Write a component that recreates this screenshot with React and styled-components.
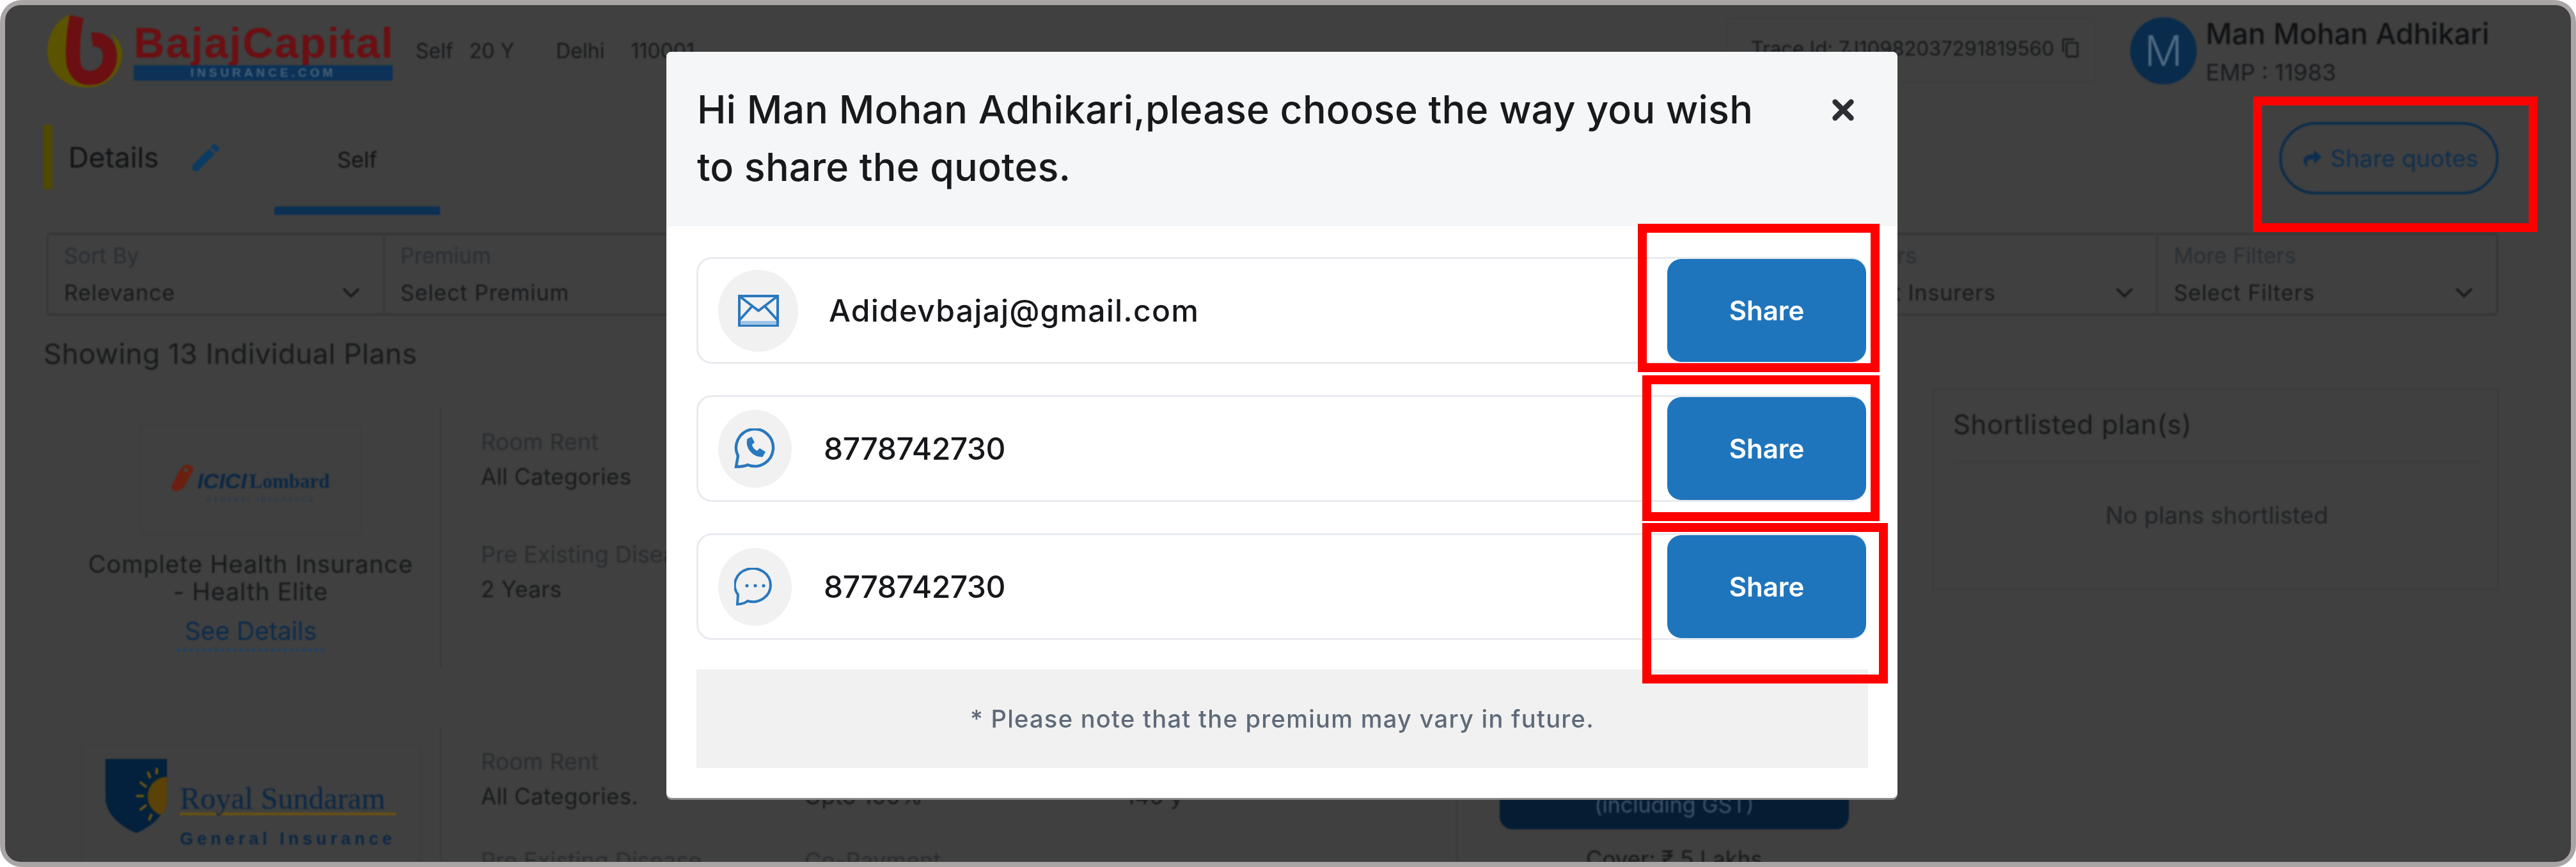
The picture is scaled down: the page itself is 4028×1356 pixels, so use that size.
import React from 'react';
import styled, { createGlobalStyle } from 'styled-components';
import { ChevronDown, X } from 'lucide-react';
import { MdEdit, MdContentCopy } from 'react-icons/md';
import { FaShare } from 'react-icons/fa';

const GlobalStyle = createGlobalStyle`
  html, body { margin: 0; padding: 0; background: #fff; }
  body { font-family: Inter, "Open Sans", sans-serif; }
  * { box-sizing: border-box; }
`;

const Frame = styled.div`
  width: 4028px;
  height: 1356px;
  padding: 8px;
  background: #a9a5a5;
  border-radius: 34px;
`;

const Panel = styled.div`
  position: relative;
  width: 100%;
  height: 100%;
  background: #404040;
  border-radius: 24px;
  overflow: hidden;
`;

const Page = styled.div`
  height: 100%;
  padding: 0 113px 0 60px;
  color: #17191b;
  filter: blur(1.1px);
`;

/* top bar */
const TopBar = styled.header`
  display: flex;
  align-items: center;
  height: 142px;
  padding-left: 6px;
`;

const Brand = styled.div`
  display: flex;
  align-items: center;
  gap: 18px;
`;

const BrandText = styled.div`
  width: 405px;
  display: flex;
  flex-direction: column;
`;

const BrandName = styled.div`
  font-family: "Liberation Sans", Arial, sans-serif;
  font-weight: 700;
  font-size: 67px;
  line-height: 70px;
  letter-spacing: 2px;
  color: #6b0f12;
  white-space: nowrap;
`;

const BrandStrip = styled.div`
  height: 24px;
  background: #0c3357;
  color: #46617a;
  font-family: "Liberation Sans", Arial, sans-serif;
  font-size: 19px;
  font-weight: 700;
  line-height: 24px;
  letter-spacing: 5px;
  text-align: center;
`;

const Meta = styled.div`
  display: flex;
  margin-left: 36px;
  font-size: 32px;
  color: #17191b;
`;

const MetaItem = styled.span`
  margin-right: ${(p) => p.$gap}px;
`;

const Trace = styled.div`
  display: flex;
  align-items: center;
  gap: 10px;
  margin-left: auto;
  width: 578px;
  height: 102px;
  padding: 0 0 8px 36px;
  border: 2px solid #3e3e3e;
  font-size: 31px;
  color: #17191b;
  white-space: nowrap;
`;

const Avatar = styled.div`
  display: flex;
  align-items: center;
  justify-content: center;
  width: 104px;
  height: 105px;
  margin-left: 53px;
  border-radius: 50%;
  background: #0a2c4c;
  color: #4f6b84;
  font-size: 66px;
  font-weight: 300;
`;

const User = styled.div`
  width: 458px;
  margin-left: 14px;
  padding-top: 5px;
  display: flex;
  flex-direction: column;
  gap: 18px;
`;

const UserName = styled.div`
  font-size: 45px;
  line-height: 44px;
  font-weight: 500;
  color: #0f1113;
  white-space: nowrap;
`;

const UserEmp = styled.div`
  font-size: 36px;
  line-height: 40px;
  color: #191b1e;
`;

/* details + tabs */
const ToolBar = styled.div`
  display: flex;
  height: 141px;
  margin-top: 45px;
`;

const DetailsMark = styled.div`
  width: 14px;
  height: 101px;
  background: #4f4a00;
`;

const Details = styled.div`
  display: flex;
  align-items: center;
  gap: 46px;
  width: 322px;
  height: 101px;
  margin-left: 25px;
  font-size: 44px;
  color: #101214;
`;

const PencilIcon = styled(MdEdit)`
  width: 56px;
  height: 56px;
  color: #0b3a63;
`;

const Tab = styled.div`
  display: flex;
  align-items: center;
  justify-content: center;
  width: 259px;
  height: 141px;
  padding-bottom: 20px;
  border-bottom: 13px solid #0b3054;
  font-size: 34px;
  color: #101214;
`;

const ShareQuotes = styled.div`
  display: flex;
  align-items: center;
  gap: 14px;
  width: 343px;
  height: 113px;
  margin: -4px 0 0 auto;
  padding-left: 34px;
  border: 4px solid #0a2c4c;
  border-radius: 57px;
  font-size: 37px;
  color: #0d2f4f;
  white-space: nowrap;
`;

const ShareArrow = styled(FaShare)`
  flex: none;
  width: 28px;
  height: 28px;
  color: #0d2f4f;
`;

/* filters */
const FilterBar = styled.div`
  display: grid;
  grid-template-columns: 526px repeat(5, 1fr) 528px;
  width: 3835px;
  height: 130px;
  margin: 28px 0 0 4px;
  border: 4px solid #383838;
  border-radius: 6px;
`;

const FilterCell = styled.div`
  padding: 12px 28px 0 ${(p) => p.$inset}px;
  border-right: 3px solid #383838;
  &:last-child { border-right: 0; }
`;

const FilterLabel = styled.div`
  font-size: 34px;
  line-height: 40px;
  color: #2a2f34;
`;

const FilterValue = styled.div`
  display: flex;
  align-items: center;
  justify-content: space-between;
  margin-top: 16px;
  font-size: 34px;
  line-height: 40px;
  letter-spacing: 0.9px;
  color: #17191b;
  white-space: nowrap;
`;

const Showing = styled.div`
  margin-top: 34px;
  font-size: 44px;
  line-height: 50px;
  letter-spacing: 0.4px;
  color: #17191b;
`;

/* plans */
const Main = styled.main`
  display: flex;
  justify-content: space-between;
  margin-top: 29px;
`;

const Cards = styled.div`
  width: 2900px;
`;

const Card = styled.article`
  display: flex;
  height: ${(p) => p.$height}px;
  padding-top: 30px;
`;

const CardBrand = styled.div`
  display: flex;
  flex-direction: column;
  align-items: center;
  width: 622px;
  height: 409px;
  padding: 26px 0 0 28px;
  border-right: 2px solid #383838;
`;

const LogoBox = styled.div`
  display: flex;
  align-items: flex-start;
  justify-content: center;
  flex: none;
  width: ${(p) => p.$width}px;
  height: ${(p) => p.$height}px;
  border: 2px solid #3e3e3e;
`;

const IciciLogo = styled.div`
  display: flex;
  flex-direction: column;
  align-items: flex-end;
  margin-top: 62px;
  gap: 6px;
`;

const IciciName = styled.div`
  display: flex;
  align-items: flex-end;
  gap: 4px;
  color: #0a2745;
  white-space: nowrap;
`;

const IciciWord = styled.span`
  font-family: "Liberation Sans", sans-serif;
  font-size: 34px;
  line-height: 34px;
  font-weight: 700;
  font-style: italic;
`;

const LombardWord = styled.span`
  font-family: "Liberation Serif", serif;
  font-size: 31px;
  line-height: 32px;
  font-weight: 700;
`;

const IciciTag = styled.div`
  margin-right: 22px;
  font-family: "Liberation Sans", sans-serif;
  font-size: 11px;
  letter-spacing: 3px;
  color: #24384c;
`;

const PlanTitle = styled.div`
  margin-top: 24px;
  font-size: 38px;
  line-height: 43px;
  letter-spacing: 0.8px;
  text-align: center;
  white-space: nowrap;
  color: #17191b;
`;

const SeeDetails = styled.div`
  margin-top: 20px;
  padding: 0 12px 7px;
  font-size: 39px;
  line-height: 40px;
  color: #0b2b4c;
  border-bottom: 5px dotted #17426c;
`;

const RoyalLogo = styled.div`
  display: flex;
  align-items: flex-start;
  gap: 20px;
  margin-top: 22px;
`;

const RoyalText = styled.div`
  margin-top: 40px;
  font-family: "Liberation Serif", serif;
  color: #0a2745;
`;

const RoyalName = styled.div`
  font-size: 48px;
  line-height: 44px;
  border-bottom: 4px solid #6b5312;
  white-space: nowrap;
`;

const RoyalTag = styled.div`
  margin-top: 22px;
  font-family: "Liberation Sans", sans-serif;
  font-size: 27px;
  font-weight: 700;
  letter-spacing: 6px;
  line-height: 30px;
  white-space: nowrap;
`;

const Features = styled.div`
  display: grid;
  grid-template-columns: 506px 502px 1fr;
  align-content: start;
  row-gap: ${(p) => p.$rowGap}px;
  width: 1587px;
  height: 409px;
  padding: 34px 0 0 62px;
`;

const Feature = styled.div`
  display: flex;
  flex-direction: column;
  gap: 14px;
`;

const FeatureLabel = styled.div`
  font-size: 36px;
  line-height: 40px;
  color: #2a2d30;
  white-space: nowrap;
`;

const FeatureValue = styled.div`
  font-size: 35px;
  line-height: 40px;
  letter-spacing: 0.3px;
  color: #17191b;
  white-space: nowrap;
`;

const CardAction = styled.div`
  display: flex;
  flex-direction: column;
  align-items: center;
  flex: none;
  width: 680px;
  height: 409px;
  padding-top: 30px;
  border-left: 2px solid #383838;
`;

const BuyButton = styled.div`
  display: flex;
  flex-direction: column;
  align-items: center;
  justify-content: flex-end;
  width: 546px;
  height: 130px;
  padding-bottom: 18px;
  border-radius: 20px;
  background: #041d33;
  color: #3f5265;
  font-size: 34px;
`;

const CoverText = styled.div`
  margin-top: 26px;
  font-size: 35px;
  line-height: 40px;
  color: #17191b;
`;

const Shortlist = styled.aside`
  width: 885px;
  height: 316px;
  padding: 0 26px 0 30px;
  border: 2px solid #3a3a3a;
`;

const ShortlistTitle = styled.div`
  padding: 29px 0 32px;
  border-bottom: 2px solid #3a3a3a;
  font-size: 42px;
  line-height: 52px;
  letter-spacing: 0.6px;
  color: #17191b;
`;

const ShortlistEmpty = styled.div`
  margin-top: 62px;
  font-size: 37px;
  line-height: 40px;
  text-align: center;
  color: #202326;
`;

/* share dialog */
const Modal = styled.section`
  position: absolute;
  left: 1034px;
  top: 73px;
  display: flex;
  flex-direction: column;
  width: 1925px;
  height: 1167px;
  background: #fff;
  border-radius: 8px;
  box-shadow: 0 3px 0 #8a8a8a;
  overflow: hidden;
  filter: blur(0.5px);
`;

const ModalHeader = styled.div`
  display: flex;
  align-items: flex-start;
  justify-content: space-between;
  height: 273px;
  padding: 45px 60px 0 48px;
  background: #f4f6f8;
`;

const ModalTitle = styled.h2`
  width: 1700px;
  margin: 0;
  font-size: 61px;
  line-height: 90px;
  font-weight: 500;
  letter-spacing: 0.2px;
  color: #17191b;
`;

const CloseIcon = styled(X)`
  width: 50px;
  height: 50px;
  margin-top: 21px;
  color: #2b2f33;
`;

const ModalBody = styled.div`
  display: flex;
  flex-direction: column;
  gap: 49px;
  padding: 48px 46px 0 47px;
`;

const ShareRow = styled.div`
  display: flex;
  align-items: center;
  width: 1829px;
  height: 167px;
  padding-left: 31px;
  border: 3px solid #e8ebef;
  border-radius: 24px;
`;

const ChannelIcon = styled.div`
  display: flex;
  align-items: center;
  justify-content: center;
  flex: none;
  width: ${(p) => p.$w}px;
  height: ${(p) => p.$h}px;
  border-radius: 50%;
  background: #f1f1f1;
`;

const ShareTarget = styled.div`
  margin-left: ${(p) => p.$gap}px;
  font-size: 48px;
  font-weight: 500;
  letter-spacing: ${(p) => p.$spacing}px;
  color: #15171a;
`;

const ShareButton = styled.button`
  align-self: stretch;
  width: 311px;
  margin: 0 -3px 0 auto;
  border: 0;
  border-radius: 22px;
  background: #1f75bc;
  color: #fff;
  font-family: inherit;
  font-size: 42px;
  font-weight: 600;
`;

const Note = styled.div`
  display: flex;
  align-items: center;
  justify-content: center;
  width: 1832px;
  height: 154px;
  margin-top: -3px;
  background: #f1f1f1;
  font-size: 38px;
  font-weight: 500;
  letter-spacing: 1.3px;
  color: #5f6a78;
`;

/* annotation rectangles drawn over the screenshot */
const RedBox = styled.div`
  position: absolute;
  left: ${(p) => p.$x - 8}px;
  top: ${(p) => p.$y - 8}px;
  width: ${(p) => p.$w}px;
  height: ${(p) => p.$h}px;
  border: 14px solid #ff0000;
`;

const MailIcon = () => (
  <svg width="64" height="50" viewBox="0 0 64 50" fill="none" stroke="#2a78bd" strokeWidth="4">
    <path d="M2 2h60v46H2z" />
    <path d="M2 2l30 23L62 2M2 40l20-22M62 40L42 18" />
    <path d="M4 41h56v6H4z" fill="#9cc3e6" stroke="none" />
  </svg>
);

const WhatsAppIcon = () => (
  <svg width="65" height="63" viewBox="0 0 65 63" fill="none" stroke="#2a78bd" strokeWidth="4.5" strokeLinecap="round">
    <path d="M3 60l3-17A29 29 0 1 1 21 57C15 60 9 60 3 60z" />
    <path d="M21 17c-3 14 8 27 23 27l4-7-8-5-4 4c-5-2-8-6-9-11l4-3-4-8z" fill="#2a78bd" strokeWidth="1.5" />
  </svg>
);

const ChatIcon = () => (
  <svg width="65" height="59" viewBox="0 0 65 59" fill="none" stroke="#2a78bd" strokeWidth="4" strokeLinecap="round">
    <path d="M5 57l1-15A28 26 0 1 1 21 52C16 56 11 57 5 57z" />
    <circle cx="20" cy="28" r="2.6" fill="#2a78bd" stroke="none" />
    <circle cx="33" cy="28" r="2.6" fill="#2a78bd" stroke="none" />
    <circle cx="46" cy="28" r="2.6" fill="#2a78bd" stroke="none" />
  </svg>
);

const BajajMark = () => (
  <svg width="117" height="115" viewBox="0 0 117 115">
    <path d="M38 0C12 8 0 36 0 58c0 34 28 57 62 57 30 0 55-23 55-53 0-14-7-24-17-32 6 14 8 22 8 32 0 20-16 42-42 42-22 0-36-16-36-42C30 40 30 20 38 0z" fill="#5c5300" />
    <path d="M46 4c-6 26-6 48-6 62 0 22 10 34 26 34 20 0 32-16 32-34 0-16-10-28-28-26" fill="none" stroke="#6b0f12" strokeWidth="22" />
  </svg>
);

const IciciMark = () => (
  <svg width="36" height="42" viewBox="0 0 36 62" preserveAspectRatio="none">
    <path d="M24 0c9 0 12 6 9 16L20 50C16 60 6 64 2 58c-3-5-1-14 4-26C11 19 16 1 24 0z" fill="#6a1f10" />
    <path d="M22 8c4 0 5 3 4 6-2 3-6 3-7 0 0-3 1-6 3-6z" fill="#404040" />
  </svg>
);

const RoyalShield = () => (
  <svg width="96" height="116" viewBox="0 0 96 116">
    <path d="M0 0h96v60c0 24-20 44-48 56C20 104 0 84 0 60z" fill="#03203c" />
    <path d="M96 28a30 30 0 0 0-30 30 30 30 0 0 0 22 30c4-6 8-14 8-24z" fill="#5a4208" />
    <path d="M48 58h12M54 36l10 8M54 80l10-8M66 20l4 10M68 96l4-10M80 14v10" stroke="#6b5312" strokeWidth="4" />
  </svg>
);

const FILTERS = [
  { label: 'Sort By', value: 'Relevance', inset: 24 },
  { label: 'Premium', value: 'Select Premium', inset: 24 },
  { label: 'Cover', value: 'Select Cover', inset: 24 },
  { label: 'Policy Type', value: 'Select Type', inset: 24 },
  { label: 'Plan Type', value: 'Select Plan', inset: 24 },
  { label: 'Insurers', value: 'Select Insurers', inset: 47 },
  { label: 'More Filters', value: 'Select Filters', inset: 24 },
];

const CHANNELS = [
  { value: 'Adidevbajaj@gmail.com', icon: <MailIcon />, w: 125, h: 128, gap: 48, spacing: 1.2 },
  { value: '8778742730', icon: <WhatsAppIcon />, w: 115, h: 122, gap: 50, spacing: -0.5 },
  { value: '8778742730', icon: <ChatIcon />, w: 115, h: 122, gap: 50, spacing: -0.5 },
];

export default function App() {
  return (
    <Frame>
      <GlobalStyle />
      <Panel>
        <Page>
          <TopBar>
            <Brand>
              <BajajMark />
              <BrandText>
                <BrandName>BajajCapital</BrandName>
                <BrandStrip>INSURANCE.COM</BrandStrip>
              </BrandText>
            </Brand>
            <Meta>
              <MetaItem $gap={25}>Self</MetaItem>
              <MetaItem $gap={65}>20 Y</MetaItem>
              <MetaItem $gap={41}>Delhi</MetaItem>
              <MetaItem $gap={0}>110001</MetaItem>
            </Meta>
            <Trace>
              Trace Id: 7J10982037291819560
              <MdContentCopy size={32} />
            </Trace>
            <Avatar>M</Avatar>
            <User>
              <UserName>Man Mohan Adhikari</UserName>
              <UserEmp>EMP : 11983</UserEmp>
            </User>
          </TopBar>

          <ToolBar>
            <DetailsMark />
            <Details>
              Details
              <PencilIcon />
            </Details>
            <Tab>Self</Tab>
            <ShareQuotes>
              <ShareArrow />
              Share quotes
            </ShareQuotes>
          </ToolBar>

          <FilterBar>
            {FILTERS.map((filter) => (
              <FilterCell key={filter.label} $inset={filter.inset}>
                <FilterLabel>{filter.label}</FilterLabel>
                <FilterValue>
                  {filter.value}
                  <ChevronDown size={44} strokeWidth={2} color="#17191b" />
                </FilterValue>
              </FilterCell>
            ))}
          </FilterBar>

          <Showing>Showing 13 Individual Plans</Showing>

          <Main>
            <Cards>
              <Card $height={500}>
                <CardBrand>
                  <LogoBox $width={345} $height={174}>
                    <IciciLogo>
                      <IciciName>
                        <IciciMark />
                        <IciciWord>ICICI</IciciWord>
                        <LombardWord>Lombard</LombardWord>
                      </IciciName>
                      <IciciTag>GENERAL INSURANCE</IciciTag>
                    </IciciLogo>
                  </LogoBox>
                  <PlanTitle>
                    Complete Health Insurance
                    <br />- Health Elite
                  </PlanTitle>
                  <SeeDetails>See Details</SeeDetails>
                </CardBrand>
                <Features $rowGap={82}>
                  <Feature>
                    <FeatureLabel>Room Rent</FeatureLabel>
                    <FeatureValue>All Categories</FeatureValue>
                  </Feature>
                  <Feature>
                    <FeatureLabel>Day Care</FeatureLabel>
                    <FeatureValue>Upto 100%</FeatureValue>
                  </Feature>
                  <Feature>
                    <FeatureLabel>Network</FeatureLabel>
                    <FeatureValue>140 y</FeatureValue>
                  </Feature>
                  <Feature>
                    <FeatureLabel>Pre Existing Disease</FeatureLabel>
                    <FeatureValue>2 Years</FeatureValue>
                  </Feature>
                </Features>
              </Card>
              <Card $height={400}>
                <CardBrand>
                  <LogoBox $width={533} $height={190}>
                    <RoyalLogo>
                      <RoyalShield />
                      <RoyalText>
                        <RoyalName>Royal Sundaram</RoyalName>
                        <RoyalTag>General Insurance</RoyalTag>
                      </RoyalText>
                    </RoyalLogo>
                  </LogoBox>
                </CardBrand>
                <Features $rowGap={61}>
                  <Feature>
                    <FeatureLabel>Room Rent</FeatureLabel>
                    <FeatureValue>All Categories.</FeatureValue>
                  </Feature>
                  <Feature>
                    <FeatureLabel>Day Care</FeatureLabel>
                    <FeatureValue>Upto 100%</FeatureValue>
                  </Feature>
                  <Feature>
                    <FeatureLabel>Network</FeatureLabel>
                    <FeatureValue>140 y</FeatureValue>
                  </Feature>
                  <Feature>
                    <FeatureLabel>Pre Existing Disease</FeatureLabel>
                  </Feature>
                  <Feature>
                    <FeatureLabel>Co-Payment</FeatureLabel>
                  </Feature>
                </Features>
                <CardAction>
                  <BuyButton>(including GST)</BuyButton>
                  <CoverText>Cover: ₹ 5 Lakhs</CoverText>
                </CardAction>
              </Card>
            </Cards>
            <Shortlist>
              <ShortlistTitle>Shortlisted plan(s)</ShortlistTitle>
              <ShortlistEmpty>No plans shortlisted</ShortlistEmpty>
            </Shortlist>
          </Main>
        </Page>

        <Modal>
          <ModalHeader>
            <ModalTitle>Hi Man Mohan Adhikari,please choose the way you wish to share the quotes.</ModalTitle>
            <CloseIcon strokeWidth={4} />
          </ModalHeader>
          <ModalBody>
            {CHANNELS.map((channel, i) => (
              <ShareRow key={i}>
                <ChannelIcon $w={channel.w} $h={channel.h}>{channel.icon}</ChannelIcon>
                <ShareTarget $gap={channel.gap} $spacing={channel.spacing}>{channel.value}</ShareTarget>
                <ShareButton>Share</ShareButton>
              </ShareRow>
            ))}
            <Note>* Please note that the premium may vary in future.</Note>
          </ModalBody>
        </Modal>

        <RedBox $x={3523} $y={151} $w={445} $h={212} />
        <RedBox $x={2561} $y={350} $w={378} $h={232} />
        <RedBox $x={2568} $y={587} $w={371} $h={228} />
        <RedBox $x={2568} $y={818} $w={384} $h={251} />
      </Panel>
    </Frame>
  );
}
